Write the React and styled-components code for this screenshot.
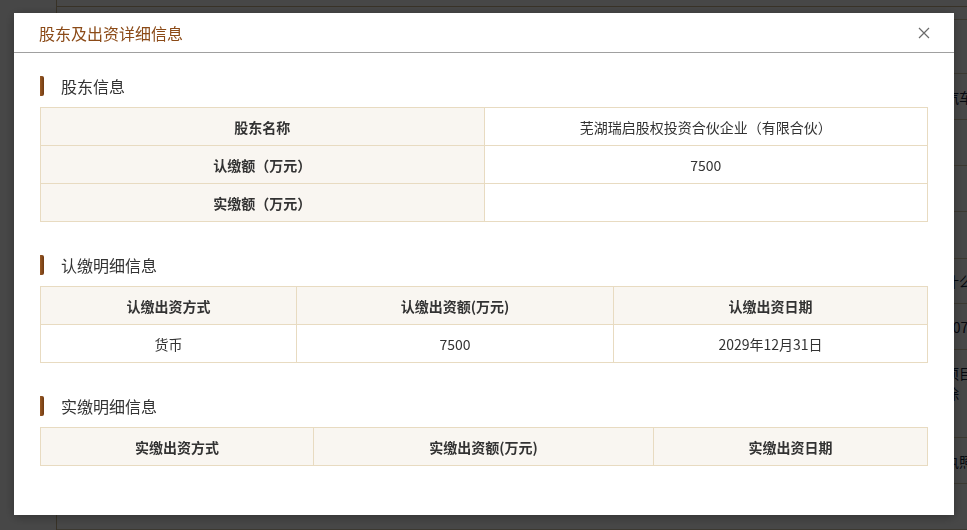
import React from "react";
import styled, { createGlobalStyle } from "styled-components";

const GlobalStyle = createGlobalStyle`
  html, body {
    margin: 0;
    padding: 0;
    height: 100%;
    overflow: hidden;
  }
  body {
    font-family: "Noto Sans CJK SC", "Noto Sans", sans-serif;
    background: #fff;
  }
`;

const theme = {
  brown: "#8b4a17",
  border: "#e8dbc1",
  headBg: "#f9f6f1",
  text: "#333",
};

// page behind the dialog
const bgRows = [
  { h: 13 },
  { h: 54 },
  { h: 46, text: "汽车销售" },
  { h: 46 },
  { h: 46 },
  { h: 47 },
  { h: 45, text: "什么、" },
  { h: 46, text: "307室" },
  { h: 88, text: "项目", sub: "除", top: true },
  { h: 46, text: "执照" },
  { h: 46 },
];

const subsTable = [
  { way: "货币", amount: "7500", date: "2029年12月31日" },
];

function App() {
  return (
    <>
      <GlobalStyle />
      <PageBehind>
        <SideRail />
        <PageMain>
          <TopStrip />
          {bgRows.map((row, i) => (
            <BgRow key={i} $h={row.h} $top={row.top}>
              {row.text && (
                <BgText>
                  {row.text}
                  {row.sub && <br />}
                  {row.sub}
                </BgText>
              )}
            </BgRow>
          ))}
        </PageMain>
      </PageBehind>
      <Mask />
      <Dialog>
        <DialogHeader>
          <DialogTitle>股东及出资详细信息</DialogTitle>
          <CloseBtn aria-label="close">
            <svg width="12" height="12" viewBox="0 0 12 12">
              <path d="M1 1L11 11M11 1L1 11" stroke="#6b6b6b" strokeWidth="1.2" fill="none" />
            </svg>
          </CloseBtn>
        </DialogHeader>
        <DialogBody>
          <Section>
            <SectionTitle>
              <Bar />
              股东信息
            </SectionTitle>
            <InfoTable>
              <tbody>
                <tr>
                  <HeadCell $w="50%">股东名称</HeadCell>
                  <Cell>芜湖瑞启股权投资合伙企业（有限合伙）</Cell>
                </tr>
                <tr>
                  <HeadCell>认缴额（万元）</HeadCell>
                  <Cell>7500</Cell>
                </tr>
                <tr>
                  <HeadCell>实缴额（万元）</HeadCell>
                  <Cell></Cell>
                </tr>
              </tbody>
            </InfoTable>
          </Section>

          <Section>
            <SectionTitle>
              <Bar />
              认缴明细信息
            </SectionTitle>
            <InfoTable>
              <thead>
                <tr>
                  <HeadCell $w="256px">认缴出资方式</HeadCell>
                  <HeadCell $w="317px">认缴出资额(万元)</HeadCell>
                  <HeadCell>认缴出资日期</HeadCell>
                </tr>
              </thead>
              <tbody>
                {subsTable.map((r, i) => (
                  <tr key={i}>
                    <Cell>{r.way}</Cell>
                    <Cell>{r.amount}</Cell>
                    <Cell>{r.date}</Cell>
                  </tr>
                ))}
              </tbody>
            </InfoTable>
          </Section>

          <Section>
            <SectionTitle>
              <Bar />
              实缴明细信息
            </SectionTitle>
            <InfoTable>
              <thead>
                <tr>
                  <HeadCell $w="273px">实缴出资方式</HeadCell>
                  <HeadCell $w="340px">实缴出资额(万元)</HeadCell>
                  <HeadCell>实缴出资日期</HeadCell>
                </tr>
              </thead>
            </InfoTable>
          </Section>
        </DialogBody>
      </Dialog>
    </>
  );
}

export default App;

const PageBehind = styled.div`
  display: flex;
  height: 100vh;
  background: #fff;
`;

const SideRail = styled.div`
  width: 56px;
  flex: none;
  border-right: 1px solid #c9b58e;
`;

const PageMain = styled.div`
  flex: 1;
  display: flex;
  flex-direction: column;
`;

const TopStrip = styled.div`
  height: 7px;
  border-bottom: 1px solid #c9b58e;
`;

const BgRow = styled.div`
  box-sizing: border-box;
  height: ${(p) => p.$h}px;
  flex: none;
  border-bottom: 1px solid #d8cbb0;
  display: flex;
  align-items: ${(p) => (p.$top ? "flex-start" : "center")};
  padding: ${(p) => (p.$top ? "13px" : "0")} 0 0 888px;
`;

const BgText = styled.div`
  font-size: 14px;
  line-height: 20px;
  color: #14203a;
  white-space: nowrap;
`;

const Mask = styled.div`
  position: fixed;
  inset: 0;
  background: rgba(0, 0, 0, 0.72);
`;

const Dialog = styled.div`
  position: fixed;
  left: 14px;
  top: 13px;
  width: 940px;
  height: 502px;
  background: #fff;
  box-shadow: 0 2px 10px rgba(0, 0, 0, 0.3);
  display: flex;
  flex-direction: column;
`;

const DialogHeader = styled.div`
  height: 39px;
  flex: none;
  border-bottom: 1px solid #a0a0a0;
  display: flex;
  align-items: center;
  justify-content: space-between;
  padding: 0 24px 0 25px;
`;

const DialogTitle = styled.h3`
  margin: 0;
  font-size: 16px;
  font-weight: 400;
  line-height: 1;
  color: ${theme.brown};
`;

const CloseBtn = styled.button`
  border: 0;
  background: none;
  padding: 0;
  width: 12px;
  height: 12px;
  display: flex;
  cursor: pointer;
`;

const DialogBody = styled.div`
  padding: 23px 26px 0;
  display: flex;
  flex-direction: column;
  gap: 33px;
`;

const Section = styled.section`
  display: flex;
  flex-direction: column;
  gap: 11px;
`;

const SectionTitle = styled.h4`
  margin: 0;
  height: 20px;
  display: flex;
  align-items: center;
  font-size: 16px;
  font-weight: 400;
  color: ${theme.text};
`;

const Bar = styled.span`
  width: 4px;
  height: 20px;
  margin-right: 17px;
  border-radius: 0 2px 2px 0;
  background: linear-gradient(90deg, #9b5a24, #6f3a12);
`;

const InfoTable = styled.table`
  width: 100%;
  border-collapse: collapse;
  table-layout: fixed;
  font-size: 14px;
  color: ${theme.text};

  tr {
    height: 38px;
  }
`;

const HeadCell = styled.th`
  box-sizing: border-box;
  width: ${(p) => p.$w || "auto"};
  border: 1px solid ${theme.border};
  background: ${theme.headBg};
  font-weight: 700;
  text-align: center;
  padding: 0;
`;

const Cell = styled.td`
  box-sizing: border-box;
  border: 1px solid ${theme.border};
  text-align: center;
  padding: 0;
`;
